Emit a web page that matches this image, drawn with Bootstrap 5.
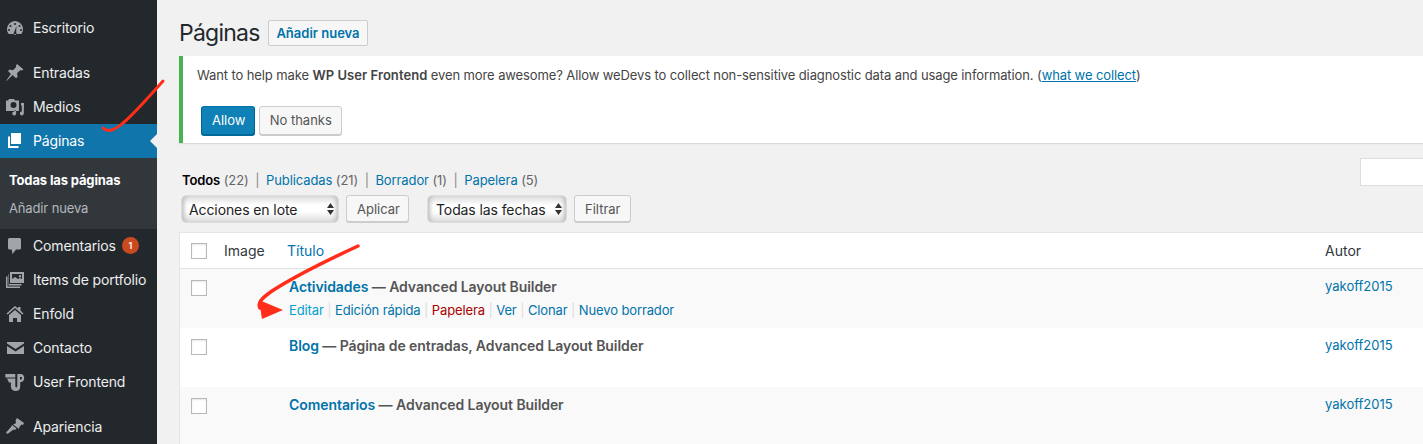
<!DOCTYPE html>
<html lang="es">
<head>
<meta charset="utf-8">
<title>Páginas</title>
<link href="https://cdn.jsdelivr.net/npm/bootstrap@5.3.0/dist/css/bootstrap.min.css" rel="stylesheet">
<style>
html,body{height:444px;overflow:hidden}
body{font-family:Inter,"Liberation Sans",sans-serif;font-size:13px;color:#444;background:#f1f1f1}
a{text-decoration:none;color:#0073aa}
.wp-shell{height:444px;position:relative;overflow:hidden}
.wp-side{width:157px;flex:0 0 157px;background:#23282d;padding-top:11px;height:444px}
.wp-item{height:34px;padding:0 0 2px 33px;color:#eee;font-size:14px;letter-spacing:-.15px;position:relative;display:flex;align-items:center}
.wp-item svg{position:absolute;left:5px;top:7px;width:20px;height:20px;fill:#a0a5aa}
.wp-item.wp-gap{margin-bottom:11px}
.wp-item.wp-active{background:#0f75ab;color:#fff}
.wp-item.wp-active svg{fill:#fff}
.wp-item.wp-active::after{content:"";position:absolute;right:0;top:10px;border:7px solid transparent;border-right-color:#f1f1f1;border-left:0}
.wp-sub{background:#32373c;height:71px;padding:11px 0 0 9px;font-size:13px;letter-spacing:-.14px;color:#b4b9be}
.wp-sub div{height:27.500px;line-height:23px}
.wp-sub .wp-cur{color:#fff;font-weight:700}
.wp-bubble{display:inline-block;width:17px;height:17px;border-radius:50%;background:#ca4a1f;color:#fff;font-size:9px;font-weight:600;line-height:17px;text-align:center;margin-left:6px}
.wp-main{flex:1 1 auto;min-width:0;padding-left:22px;}
.wp-head{height:56px;padding-top:20px;gap:9px}
.wp-title{font-size:23px;font-weight:400;letter-spacing:-.75px;color:#23282d;margin:0;line-height:26px;width:80px;white-space:nowrap}
.wp-add{display:inline-block;height:26px;line-height:24px;width:100px;text-align:center;border:1px solid #ccc;border-radius:2px;background:#f7f7f7;font-weight:600;font-size:13px;white-space:nowrap}
.wp-notice{height:87px;background:#fff;border-left:4px solid #46b450;box-shadow:0 1px 1px rgba(0,0,0,.1);padding:11px 0 0 14px;white-space:nowrap;color:#444}
.wp-notice p{margin:0;height:39px;line-height:16px;letter-spacing:-.11px}
.wp-notice b{letter-spacing:.05px}
.wp-btn{display:inline-block;height:29px;line-height:27px;padding:0 10px;border:1px solid #ccc;border-radius:3px;background:#f7f7f7;box-shadow:0 1px 0 #ccc;font-size:13px;color:#555;vertical-align:top;text-align:center}
.wp-primary{background:#1081b6;border-color:#0073aa #006799 #006799;box-shadow:0 1px 0 #006799;color:#fff}
.wp-notice .wp-btn{margin-left:4px}
.wp-notice .wp-btn+.wp-btn{margin-left:0}
.wp-filter{height:89px;position:relative}
.wp-views{position:absolute;left:3px;top:28px;line-height:18px;color:#666;white-space:nowrap;letter-spacing:-.1px}
.wp-views b{color:#000;font-weight:600}
.wp-views i{font-style:normal;color:#888;padding:0 3px}
.wp-search{position:absolute;left:1181px;top:15px;width:120px;height:28px;background:#fff;border:1px solid #ddd}
.wp-tools{position:absolute;left:2px;top:52px;display:flex}
.wp-sel{height:28px;border-radius:5px;background:linear-gradient(#dcdcdc,#fff 35%,#fff 60%,#dcdcdc);border:1px solid #ddd;box-shadow:inset 5px 0 4px -3px #bbb,inset -5px 0 4px -3px #bbb;color:#222;font-size:14px;letter-spacing:-.1px;padding-left:7px;line-height:27px;position:relative;white-space:nowrap}
.wp-sel+.wp-btn+.wp-sel{padding-left:8px}
.wp-arrows{position:absolute;right:4px;top:7px;width:7px;height:12px;fill:#333}
.wp-tools .wp-btn{height:27px;line-height:26px}
.wp-tab{width:1244px;table-layout:fixed;background:#fff;border:1px solid #e5e5e5;border-right:0;margin:0;border-collapse:separate;border-spacing:0}
.wp-tab th,.wp-tab td{padding:0;border:0;vertical-align:top;background:transparent;box-shadow:none}
.wp-tab thead th{height:35px;border-bottom:1px solid #e1e1e1;font-weight:400;color:#32373c;font-size:14px;line-height:35px}
.wp-tab thead a{font-size:14px}
.wp-tab tbody td{height:59px;padding-top:9px;line-height:17px}
.wp-tab tbody tr:nth-child(odd) td{background:#f9f9f9}
.wp-check{display:block;width:16px;height:16px;border:1px solid #b4b9be;background:#fff;margin:10px 0 0 11px;box-shadow:inset 0 1px 2px rgba(0,0,0,.1)}
.wp-tab tbody .wp-check{margin-top:2px}
.wp-row-title{font-weight:600;font-size:14px;line-height:18px;color:#555;white-space:nowrap;padding-left:2px;letter-spacing:-.07px}
.wp-acts{margin-top:5px;line-height:18px;white-space:nowrap;color:#ddd;padding-left:2px;letter-spacing:-.12px}
.wp-acts a:first-child{color:#00a0d2}
.wp-acts .wp-del{color:#a00}
.wp-red{position:absolute;left:0;top:0;width:1423px;height:444px;pointer-events:none}
</style>
</head>
<body>
<div class="wp-shell d-flex">
<nav class="wp-side">
  <div class="wp-item wp-gap"><svg viewBox="0 0 20 20"><path d="M10 3a8.500 8 0 0 0-8 8c0 2 .6 3.500 1.700 5h12.600c1.100-1.500 1.700-3 1.700-5a8.500 8 0 0 0-8-8zM10 5a1 1 0 1 1 0 2 1 1 0 0 1 0-2zM5.500 7a1 1 0 1 1 0 2 1 1 0 0 1 0-2zM14.500 7a1 1 0 1 1 0 2 1 1 0 0 1 0-2zM4 11a1 1 0 1 1 0 2 1 1 0 0 1 0-2zM16 11a1 1 0 1 1 0 2 1 1 0 0 1 0-2zM11.500 8l-.4 6.200a1.500 1.500 0 1 1-2 0z" fill-rule="evenodd"/></svg>Escritorio</div>
  <div class="wp-item"><svg viewBox="0 0 20 20"><path d="M12 1l6.500 5.500-1.800 1-1.200-.6-3.500 3.300.6 3.500-1.600 1.500-3.300-3.300L1.500 18l-.3-.3 4.700-6.800-2.900-3 1.700-1.500 3.200.9 3.300-3.300-.3-1.300z"/></svg>Entradas</div>
  <div class="wp-item"><svg viewBox="0 0 20 20"><path d="M4 2h5l1 1.500h4V14h-4c-.6-.3-1.300-.3-2 0H1V3.500h2zM8.500 5a3 3 0 1 0 0 6 3 3 0 0 0 0-6zM16 6h3l-.2 10.500a2 2 0 1 1-2-2.100V8.500H16zM11 13l.2 3.500a2 2 0 1 1-4 0 2 2 0 0 1 2-2z" fill-rule="evenodd"/></svg>Medios</div>
  <div class="wp-item wp-active"><svg viewBox="0 0 20 20"><path d="M6 2h10v11H6zM3 5.500h2V15h8.500v2H3z"/></svg>Páginas</div>
  <div class="wp-sub"><div class="wp-cur">Todas las páginas</div><div>Añadir nueva</div></div>
  <div class="wp-item"><svg viewBox="0 0 20 20"><path d="M4.500 2h10A1.500 1.500 0 0 1 16 3.500v8.500a1.500 1.500 0 0 1-1.500 1.500H11L7.500 18l-.8-4.500H4.500A1.500 1.500 0 0 1 3 12V3.500A1.500 1.500 0 0 1 4.500 2z"/></svg>Comentarios<span class="wp-bubble">1</span></div>
  <div class="wp-item"><svg viewBox="0 0 20 20"><path d="M5 2h14v11H5zM7 4v5l3-2 3 2 2-1 2 1V4zM15 5a1.200 1.200 0 1 1 0 2.400A1.200 1.200 0 0 1 15 5zM3.500 4H4v10h12.500v1.500h-13zM1 6.500h1.500V16.500H15V18H1z" fill-rule="evenodd"/></svg>Items de portfolio</div>
  <div class="wp-item"><svg viewBox="0 0 20 20"><path d="M10 2l3 2.500V3h2.500v3.600L18.500 9.500l-1 1L10 4 2.500 10.500l-1-1zM4 11l6-5 6 5v7h-4v-4H8v4H4z"/></svg>Enfold</div>
  <div class="wp-item"><svg viewBox="0 0 20 20"><path d="M2 4h17v1.500L10.500 11 2 5.500zM2 8l8.500 5.500L19 8v8H2z"/></svg>Contacto</div>
  <div class="wp-item wp-gap"><svg viewBox="0 0 20 20"><path d="M.3 2h10v3.500H.3zM2 6.500h8.300V14c0 .9.4 1.400 1 1.400s1-.5 1-1.400V2h3.500c2.300 0 3.400 1.800 3.400 4s-1.100 4-3.400 4h-.6v4.500c0 3-1.700 4.500-4.500 4.500s-4.800-1.600-4.800-4.500v-4H4zM15 5v2.500h1c.7 0 1-.5 1-1.200S16.700 5 16 5z" fill-rule="evenodd"/></svg>User Frontend</div>
  <div class="wp-item"><svg viewBox="0 0 20 20"><path d="M12 1l7 5-1 2-2-.5-.5 1.500-1 .5-.5 2.500-6-4.500 2.500-1 .5-1.500-.5-1.500zM7 8l4.500 3.500-1.500 1.500-1.500-.5L2.500 17 1 15.500 6 10z"/></svg>Apariencia</div>
</nav>
<main class="wp-main">
  <div class="wp-head d-flex align-items-start">
    <h1 class="wp-title">Páginas</h1><a class="wp-add" href="#">Añadir nueva</a>
  </div>
  <div class="wp-notice">
    <p>Want to help make <b class="fw-semibold">WP User Frontend</b> even more awesome? Allow weDevs to collect non-sensitive diagnostic data and usage information. (<a class="text-decoration-underline" href="#">what we collect</a>)</p>
    <a class="wp-btn wp-primary" style="width:54px" href="#">Allow</a>
    <a class="wp-btn" style="width:83px" href="#">No thanks</a>
  </div>
  <div class="wp-filter">
    <div class="wp-views"><b>Todos</b> (22) <i>|</i> <a href="#">Publicadas</a> (21) <i>|</i> <a href="#">Borrador</a> (1) <i>|</i> <a href="#">Papelera</a> (5)</div>
    <div class="wp-search"></div>
    <div class="wp-tools">
      <div class="wp-sel" style="width:158px">Acciones en lote<svg class="wp-arrows" viewBox="0 0 7 12"><path d="M3.500 0L7 5H0zM0 7h7l-3.500 5z"/></svg></div>
      <a class="wp-btn" style="width:63px;margin-left:7px" href="#">Aplicar</a>
      <div class="wp-sel" style="width:140px;margin-left:18px">Todas las fechas<svg class="wp-arrows" viewBox="0 0 7 12"><path d="M3.500 0L7 5H0zM0 7h7l-3.500 5z"/></svg></div>
      <a class="wp-btn" style="width:57px;margin-left:7px" href="#">Filtrar</a>
    </div>
  </div>
  <table class="table wp-tab">
    <colgroup><col style="width:44px"><col style="width:63px"><col style="width:1038px"><col></colgroup>
    <thead><tr><th><span class="wp-check"></span></th><th>Image</th><th><a href="#">Título</a></th><th>Autor</th></tr></thead>
    <tbody>
      <tr><td><span class="wp-check"></span></td><td></td><td><div class="wp-row-title"><a href="#">Actividades</a> — Advanced Layout Builder</div><div class="wp-acts"><a href="#">Editar</a> | <a href="#">Edición rápida</a> | <a class="wp-del" href="#">Papelera</a> | <a href="#">Ver</a> | <a href="#">Clonar</a> | <a href="#">Nuevo borrador</a></div></td><td><a href="#">yakoff2015</a></td></tr>
      <tr><td><span class="wp-check"></span></td><td></td><td><div class="wp-row-title"><a href="#">Blog</a> — Página de entradas, Advanced Layout Builder</div></td><td><a href="#">yakoff2015</a></td></tr>
      <tr><td><span class="wp-check"></span></td><td></td><td><div class="wp-row-title"><a href="#">Comentarios</a> — Advanced Layout Builder</div></td><td><a href="#">yakoff2015</a></td></tr>
    </tbody>
  </table>
</main>
<svg class="wp-red" viewBox="0 0 1423 444" fill="none">
  <path d="M163 81C148 98 133 115 123 123C114 131 107 132 103 128" stroke="#ff2d1a" stroke-width="3" stroke-linecap="round"/>
  <path d="M358 246C330 259 295 276 272 291C262 298 257 303 260 308" stroke="#ff2d1a" stroke-width="3.500" stroke-linecap="round"/>
  <path d="M259 300L283 310L262 319Z" fill="#ff2d1a"/>
</svg>
</div>
<script src="https://cdn.jsdelivr.net/npm/bootstrap@5.3.0/dist/js/bootstrap.bundle.min.js"></script>
</body>
</html>
